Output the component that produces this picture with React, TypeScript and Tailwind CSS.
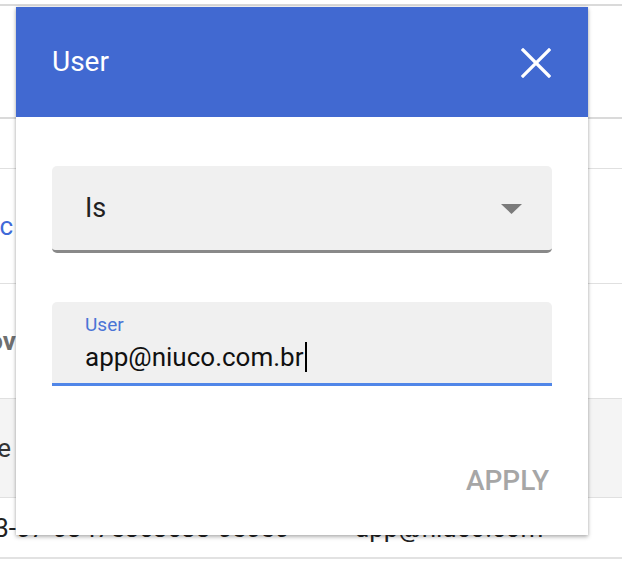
import React from "react";

const font = { fontFamily: "Roboto, 'Noto Sans', Arial, sans-serif" };

function EdgeCell({ children, className }: { children: React.ReactNode; className?: string }) {
  // cell whose text runs off the left edge of the window
  return (
    <div className={"flex w-[16px] shrink-0 justify-end whitespace-nowrap " + (className ?? "")}>
      {children}
    </div>
  );
}

function Table() {
  return (
    <div className="flex w-full flex-col bg-white">
      <div className="h-[4px]" />
      <div className="h-[2px] bg-[#dadada]" />
      <div className="h-[111px]" />
      <div className="h-[2px] bg-[#dadada]" />
      <div className="h-[49px]" />
      <div className="h-px bg-[#e0e0e0]" />
      <div className="flex h-[114px] items-center">
        <EdgeCell className="pr-[3px] text-[26px] text-[#3f6ad8]">Sync</EdgeCell>
      </div>
      <div className="h-px bg-[#e0e0e0]" />
      <div className="flex h-[114px] items-center">
        <EdgeCell className="text-[26px] font-bold text-[#6f6f6f]">Nov</EdgeCell>
      </div>
      <div className="h-px bg-[#e0e0e0]" />
      <div className="flex h-[98px] items-center bg-[#f4f4f4]">
        <EdgeCell className="pr-[5px] text-[26px] text-[#333]">Type</EdgeCell>
      </div>
      <div className="h-px bg-[#e0e0e0]" />
      <div className="flex h-[59px] items-center pt-[2px] text-[26px] text-[#222]">
        <EdgeCell>2019-03-</EdgeCell>
        <div className="w-[256px] shrink-0 whitespace-nowrap">07-0347e3c8c88-0e0e6</div>
        <div className="ml-[83px] whitespace-nowrap">app@niuco.com</div>
      </div>
      <div className="h-[2px] bg-[#e2e2e2]" />
    </div>
  );
}

function FilterDialog() {
  return (
    <div className="absolute left-[16px] top-[7px] flex h-[528px] w-[572px] flex-col bg-white shadow-[0_2px_4px_rgba(0,0,0,0.28),0_0_3px_rgba(0,0,0,0.12)]">
      <header className="flex h-[110px] shrink-0 items-center justify-between bg-[#4169d1] pl-[36px] pr-[37px]">
        <h2 className="text-[28px] font-normal text-white">User</h2>
        <svg width="30" height="30" viewBox="0 0 30 30" className="mt-[1px]">
          <path d="M2 2 L28 28 M28 2 L2 28" stroke="white" strokeWidth="3.2" strokeLinecap="square" />
        </svg>
      </header>
      <div className="flex flex-1 flex-col px-[36px]">
        <div className="mt-[49px] flex h-[87px] items-center justify-between rounded-[5px] border-b-[3px] border-[#898989] bg-[#f0f0f0] pl-[33px] pr-[30px]">
          <span className="text-[27px] text-[#212121]">Is</span>
          <svg width="21" height="10" viewBox="0 0 21 10" className="mt-[1px]">
            <polygon points="0,0 21,0 10.5,10" fill="#7b7b7b" />
          </svg>
        </div>
        <div className="mt-[49px] flex h-[84px] flex-col rounded-t-[5px] border-b-[3px] border-[#5086e8] bg-[#f0f0f0] pl-[33px] pt-[11px]">
          <label className="text-[19px] leading-[24px] text-[#4a74d6]">User</label>
          <div className="mt-[4px] flex items-center text-[26px] leading-[32px] text-[#111]">
            <span>app@niuco.com.br</span>
            <span className="ml-[1px] h-[30px] w-[2px] bg-black" />
          </div>
        </div>
        <div className="mt-auto flex justify-end pb-[33px] pr-[3px]">
          <button className="text-[28px] font-medium uppercase text-[#a6a6a6]">Apply</button>
        </div>
      </div>
    </div>
  );
}

export default function App() {
  return (
    <div className="relative h-[568px] w-[622px] overflow-hidden bg-white" style={font}>
      <Table />
      <FilterDialog />
    </div>
  );
}
